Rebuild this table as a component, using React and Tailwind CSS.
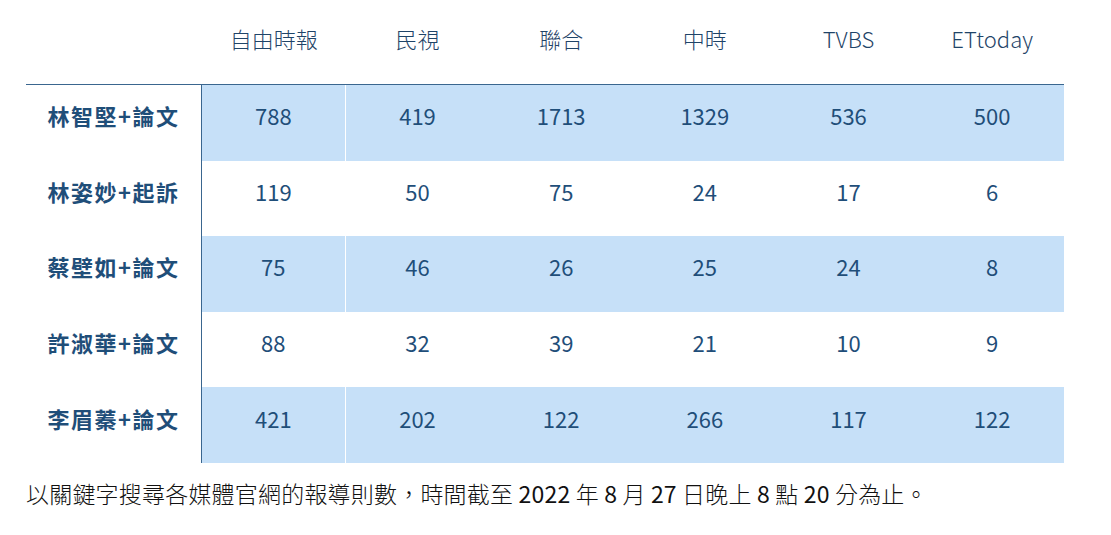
import React from 'react';

const media = ['自由時報', '民視', '聯合', '中時', 'TVBS', 'ETtoday'];

const rows = [
  { label: '林智堅+論文', values: [788, 419, 1713, 1329, 536, 500], shaded: true },
  { label: '林姿妙+起訴', values: [119, 50, 75, 24, 17, 6], shaded: false },
  { label: '蔡壁如+論文', values: [75, 46, 26, 25, 24, 8], shaded: true },
  { label: '許淑華+論文', values: [88, 32, 39, 21, 10, 9], shaded: false },
  { label: '李眉蓁+論文', values: [421, 202, 122, 266, 117, 122], shaded: true },
];

const font = { fontFamily: '"Noto Sans CJK TC", "Noto Sans", sans-serif' };

export default function App() {
  return (
    <div className="w-[1111px] h-[535px] bg-white overflow-hidden" style={font}>
      <div className="ml-[26px] w-[1038px]">
        {/* header */}
        <div className="grid grid-cols-[176px_repeat(6,1fr)] h-[85px] border-b-[1.5px] border-[#3a668f]">
          <div />
          {media.map((m) => (
            <div key={m} className="flex items-center justify-center pb-[8px] text-[22px] font-light text-[#1f4468]">
              {m}
            </div>
          ))}
        </div>

        {/* body */}
        {rows.map((r) => (
          <div key={r.label} className="grid grid-cols-[176px_repeat(6,1fr)] h-[75.6px]">
            <div className="flex items-center justify-center pb-[14px] border-r-[1.5px] border-[#3a668f] text-[22px] font-bold text-[#1f4e79] tracking-[1.5px]">
              {r.label}
            </div>
            {r.values.map((v, i) => (
              <div
                key={i}
                className={`flex items-center justify-center pb-[14px] text-[22px] text-[#1f4e79] ${
                  r.shaded ? 'bg-[#c6e0f8]' : 'bg-white'
                } ${i === 0 ? 'border-r border-white' : ''}`}
              >
                {v}
              </div>
            ))}
          </div>
        ))}
      </div>

      <p className="ml-[26px] mt-[13px] text-[23px] tracking-[0.2px] font-light text-[#111] whitespace-nowrap">
        以關鍵字搜尋各媒體官網的報導則數，時間截至 <span className="font-normal">2022</span> 年 <span className="font-normal">8</span> 月 <span className="font-normal">27</span> 日晚上 <span className="font-normal">8</span> 點 <span className="font-normal">20</span> 分為止。
      </p>
    </div>
  );
}
